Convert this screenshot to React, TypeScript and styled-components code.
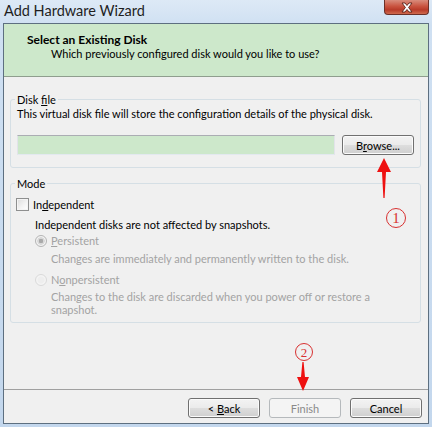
import styled, { createGlobalStyle } from "styled-components";

const FONT = `Lato, "Liberation Sans", sans-serif`;

const GlobalStyle = createGlobalStyle`
  html, body {
    margin: 0;
    padding: 0;
  }
  body {
    width: 432px;
    height: 427px;
    overflow: hidden;
    background: #c4d8ee;
  }
`;

const Window = styled.div`
  position: relative;
  width: 432px;
  height: 427px;
  box-sizing: border-box;
  padding: 0 3px 3px 3px;
  display: flex;
  flex-direction: column;
  background: linear-gradient(180deg, #dde9f6 0%, #cfe0f2 6%, #c3d7ed 100%);
  font-family: ${FONT};
  font-size: 11px;
  color: #000;
`;

const TitleBar = styled.div`
  height: 23px;
  display: flex;
  justify-content: space-between;
  align-items: flex-start;
`;

const Title = styled.span`
  padding: 2px 0 0 1px;
  font-size: 14.5px;
  line-height: 17px;
  color: #1e1e1e;
`;

const CloseBtn = styled.div`
  width: 45px;
  height: 15px;
  box-sizing: border-box;
  border: 1px solid #6b3028;
  border-top: none;
  border-radius: 0 0 4px 4px;
  background: linear-gradient(180deg, #d98c7c 0%, #c9533f 45%, #b83b29 70%, #cf6a4e 100%);
  display: flex;
  align-items: center;
  justify-content: center;
`;

const Client = styled.div`
  flex: 1;
  display: flex;
  flex-direction: column;
  border: 1px solid #5d6f80;
  background: #f0f0f0;
`;

const Header = styled.div`
  height: 53px;
  box-sizing: border-box;
  padding: 9px 0 0 23px;
  background: #cde8cb;
  border-bottom: 1px solid #8f9e8e;
`;

const HeaderTitle = styled.div`
  font-weight: 700;
  font-size: 12px;
  line-height: 14px;
`;

const HeaderSub = styled.div`
  padding-left: 24px;
  line-height: 14px;
`;

const Body = styled.div`
  flex: 1;
  display: flex;
  flex-direction: column;
  padding: 16px 7px 0 6px;
`;

const Group = styled.fieldset<{ $pb: number; $mt?: number }>`
  margin: ${(p) => p.$mt || 0}px 0 0 0;
  padding: 0 6px ${(p) => p.$pb}px 6px;
  border: 1px solid #d5dfe5;
  border-radius: 3px;
  min-width: 0;
`;

const Legend = styled.legend`
  padding: 0 2px;
  margin-left: -2px;
  line-height: 13px;
`;

const Line = styled.div<{ $mt?: number; $indent?: number; $muted?: boolean }>`
  margin-top: ${(p) => p.$mt || 0}px;
  padding-left: ${(p) => p.$indent || 0}px;
  line-height: 13px;
  color: ${(p) => (p.$muted ? "#a3a3a3" : "#000")};
`;

const FileRow = styled.div`
  margin-top: 15px;
  display: flex;
  gap: 7px;
`;

const FileInput = styled.div`
  flex: 1;
  height: 20px;
  box-sizing: border-box;
  background: #cde8cb;
  border: 1px solid #e2e3ea;
  border-top-color: #abadb3;
  border-bottom-color: #e3e9ef;
`;

const Button = styled.button<{ $off?: boolean }>`
  width: 72px;
  height: 20px;
  box-sizing: border-box;
  padding: 0;
  border: 1px solid ${(p) => (p.$off ? "#b5b9bc" : "#707070")};
  border-radius: 3px;
  background: ${(p) =>
    p.$off
      ? "#f4f4f4"
      : "linear-gradient(180deg, #f3f3f3 0%, #ebebeb 48%, #dddddd 52%, #cfcfcf 100%)"};
  box-shadow: inset 0 0 0 1px ${(p) => (p.$off ? "#f4f4f4" : "#fbfbfb")};
  font-family: ${FONT};
  font-size: 11px;
  color: ${(p) => (p.$off ? "#8a8a8a" : "#000")};
`;

const Option = styled.div<{ $mt: number; $indent?: number; $muted?: boolean }>`
  margin-top: ${(p) => p.$mt}px;
  padding-left: ${(p) => p.$indent || 0}px;
  display: flex;
  align-items: center;
  gap: 4px;
  height: 15px;
  color: ${(p) => (p.$muted ? "#a3a3a3" : "#000")};
`;

const CheckBox = styled.span`
  width: 13px;
  height: 13px;
  box-sizing: border-box;
  margin-left: -1px;
  border: 1px solid #8e8f8f;
  background: linear-gradient(135deg, #dcdcdc 0%, #f4f4f4 60%, #ffffff 100%);
  box-shadow: inset 0 0 0 1px #f4f4f4;
`;

const Radio = styled.span<{ $checked?: boolean }>`
  width: 12px;
  height: 12px;
  box-sizing: border-box;
  border-radius: 50%;
  border: 1px solid ${(p) => (p.$checked ? "#b4b4b4" : "#dadada")};
  background: ${(p) =>
    p.$checked
      ? "radial-gradient(circle, #a9a9a9 0 2px, #d8d8d8 2.5px 3.5px, #f2f2f2 4px)"
      : "radial-gradient(circle, #eeeeee 0 3px, #f4f4f4 4px)"};
`;

const Footer = styled.div`
  border-top: 1px solid #a0a0a0;
  padding: 8px 6px 5px 0;
  display: flex;
  justify-content: flex-end;
  gap: 9px;
`;

const Arrow = styled.svg`
  position: absolute;
  left: 0;
  top: 0;
  pointer-events: none;
`;

const Mark = styled.span<{ $x: number; $y: number; $d: number }>`
  position: absolute;
  left: ${(p) => p.$x - p.$d / 2}px;
  top: ${(p) => p.$y - p.$d / 2}px;
  width: ${(p) => p.$d}px;
  height: ${(p) => p.$d}px;
  box-sizing: border-box;
  border: 1px solid #d83030;
  border-radius: 50%;
  display: flex;
  align-items: center;
  justify-content: center;
  font-family: "Liberation Serif", serif;
  font-size: ${(p) => p.$d - 5}px;
  line-height: 1;
  color: #d83030;
`;

export default function App() {
  return (
    <>
      <GlobalStyle />
      <Window>
        <TitleBar>
          <Title>Add Hardware Wizard</Title>
          <CloseBtn>
            <svg width="14" height="11" viewBox="0 0 14 11">
              <path
                d="M2 1 L5 1 L7 3.5 L9 1 L12 1 L8.6 5.5 L12 10 L9 10 L7 7.5 L5 10 L2 10 L5.4 5.5 Z"
                fill="#ffffff"
                stroke="#5a2219"
                strokeWidth="0.9"
                strokeLinejoin="round"
              />
            </svg>
          </CloseBtn>
        </TitleBar>
        <Client>
          <Header>
            <HeaderTitle>Select an Existing Disk</HeaderTitle>
            <HeaderSub>Which previously configured disk would you like to use?</HeaderSub>
          </Header>
          <Body>
            <Group $pb={12}>
              <Legend>
                Disk <u>f</u>ile
              </Legend>
              <Line $mt={1}>This virtual disk file will store the configuration details of the physical disk.</Line>
              <FileRow>
                <FileInput />
                <Button>
                  B<u>r</u>owse...
                </Button>
              </FileRow>
            </Group>
            <Group $pb={6} $mt={9}>
              <Legend>Mode</Legend>
              <Option $mt={7}>
                <CheckBox />
                <span>
                  In<u>d</u>ependent
                </span>
              </Option>
              <Line $mt={6} $indent={18}>
                Independent disks are not affected by snapshots.
              </Line>
              <Option $mt={2} $indent={18} $muted>
                <Radio $checked />
                <span>
                  <u>P</u>ersistent
                </span>
              </Option>
              <Line $mt={4} $indent={34} $muted>
                Changes are immediately and permanently written to the disk.
              </Line>
              <Option $mt={7} $indent={18} $muted>
                <Radio />
                <span>
                  N<u>o</u>npersistent
                </span>
              </Option>
              <Line $mt={3} $indent={34} $muted>
                Changes to the disk are discarded when you power off or restore a
                <br />
                snapshot.
              </Line>
            </Group>
          </Body>
          <Footer>
            <Button>
              &lt; <u>B</u>ack
            </Button>
            <Button $off>Finish</Button>
            <Button>Cancel</Button>
          </Footer>
        </Client>
        <Arrow width="432" height="427" viewBox="0 0 432 427">
          <path d="M384 158 L391 172 L386 172 L384.6 198 L383.4 198 L382 172 L377 172 Z" fill="#ee1111" />
          <path d="M303 391 L309 377 L305 377 L303.6 362 L302.4 362 L301 377 L297 377 Z" fill="#ee1111" />
        </Arrow>
        <Mark $x={396} $y={218} $d={20}>1</Mark>
        <Mark $x={304} $y={352} $d={18}>2</Mark>
      </Window>
    </>
  );
}
